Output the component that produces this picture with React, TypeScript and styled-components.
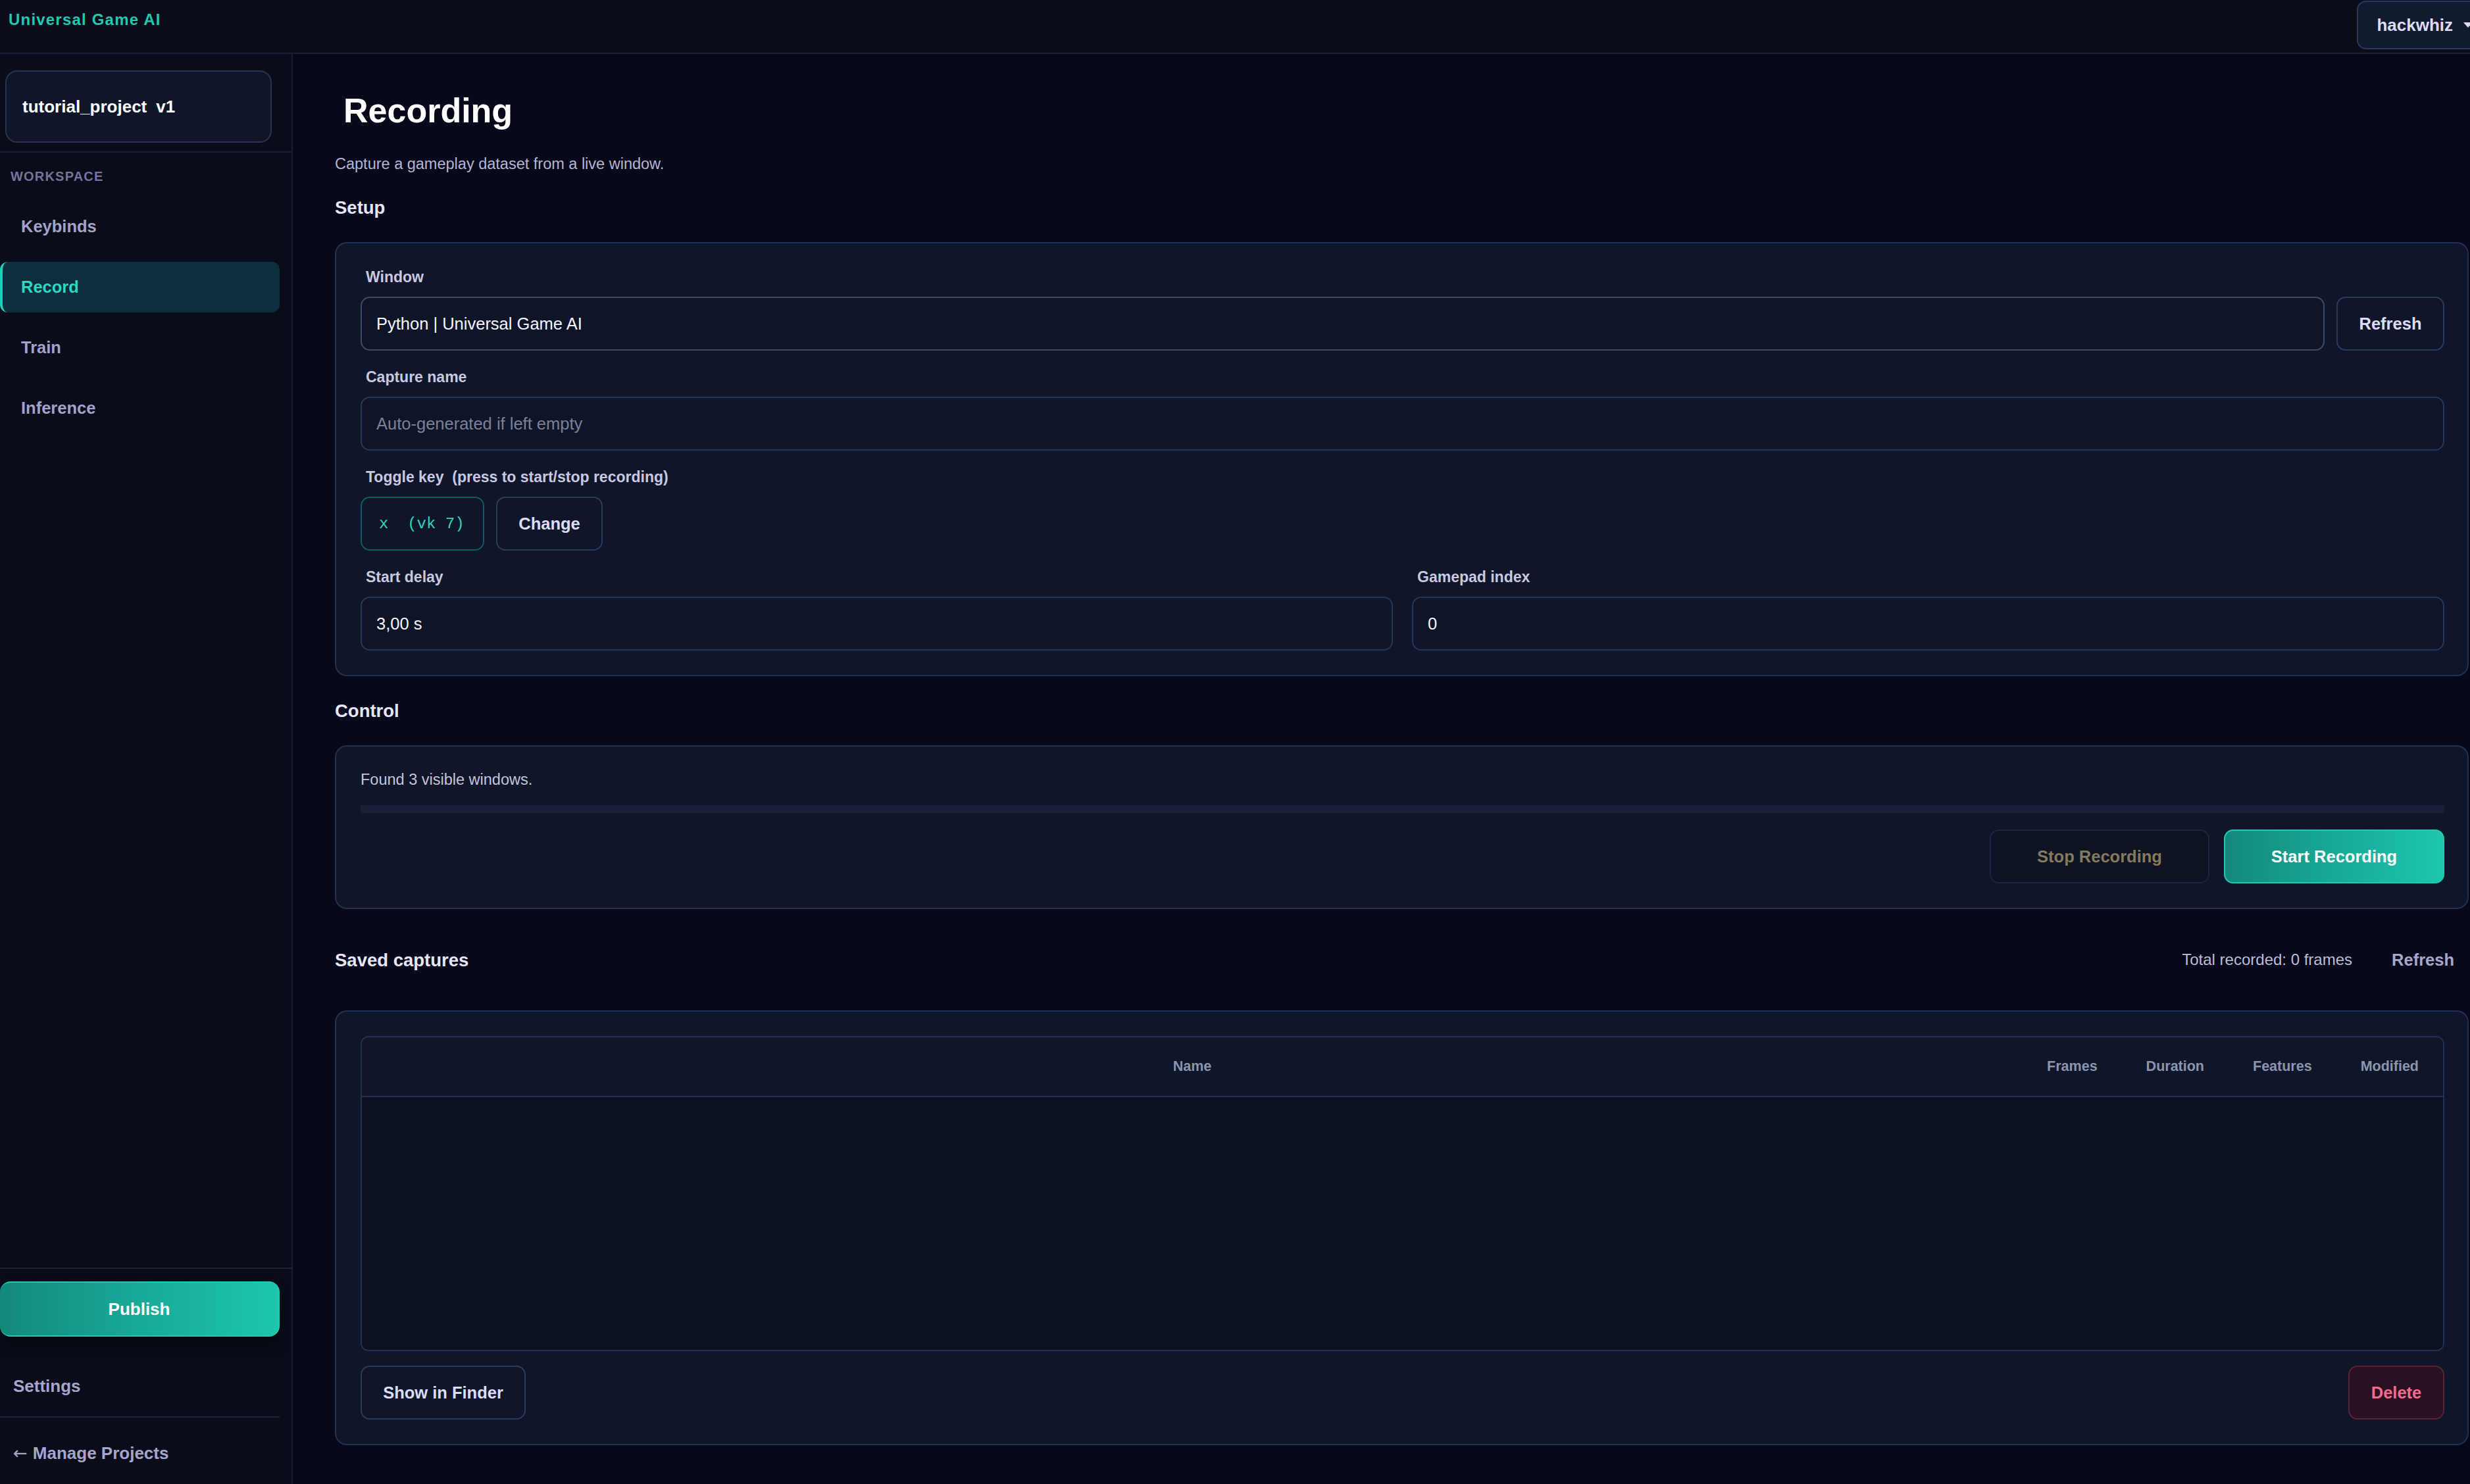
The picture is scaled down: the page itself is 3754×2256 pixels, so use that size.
import styled, { createGlobalStyle } from "styled-components"

const GlobalStyle = createGlobalStyle`
  * {
    box-sizing: border-box;
  }

  html,
  body {
    margin: 0;
    background: #07081a;
  }

  body {
    font-family: "Liberation Sans", Arial, sans-serif;
    color: #e4e4f7;
    overflow: hidden;
  }
`

const navItems = ["Keybinds", "Record", "Train", "Inference"]
const columns = ["Name", "Frames", "Duration", "Features", "Modified"]

export default function App() {
  return (
    <Shell>
      <GlobalStyle />
      <TopBar>
        <Brand>Universal Game AI</Brand>
        <UserButton>
          hackwhiz
          <svg width="14" height="8" viewBox="0 0 14 8">
            <path d="M0 0 L14 0 L7 8 Z" fill="#dcdcf7" />
          </svg>
        </UserButton>
      </TopBar>

      <Body>
        <Sidebar>
          <ProjectBlock>
            <ProjectCard>
              tutorial_project<Version>v1</Version>
            </ProjectCard>
          </ProjectBlock>

          <NavBlock>
            <SectionLabel>WORKSPACE</SectionLabel>
            <NavList>
              {navItems.map((item) => (
                <NavItem key={item} $active={item === "Record"}>
                  {item}
                </NavItem>
              ))}
            </NavList>
          </NavBlock>

          <SidebarFooter>
            <PublishButton>Publish</PublishButton>
            <SettingsLink>Settings</SettingsLink>
            <ManageLink>
              <BackArrow>←</BackArrow>Manage Projects
            </ManageLink>
          </SidebarFooter>
        </Sidebar>

        <Main>
          <PageTitle>Recording</PageTitle>
          <Subtitle>Capture a gameplay dataset from a live window.</Subtitle>

          <SectionTitle>Setup</SectionTitle>
          <Card>
            <Fields>
              <Field>
                <FieldLabel>Window</FieldLabel>
                <InlineRow>
                  <TextInput $strong readOnly value="Python | Universal Game AI" />
                  <Button $width={164}>Refresh</Button>
                </InlineRow>
              </Field>

              <Field>
                <FieldLabel>Capture name</FieldLabel>
                <TextInput placeholder="Auto-generated if left empty" />
              </Field>

              <Field>
                <FieldLabel>Toggle key{"  "}(press to start/stop recording)</FieldLabel>
                <InlineRow>
                  <KeyChip>{"x  (vk 7)"}</KeyChip>
                  <Button $width={162}>Change</Button>
                </InlineRow>
              </Field>

              <TwoColumns>
                <Field>
                  <FieldLabel>Start delay</FieldLabel>
                  <TextInput readOnly value="3,00 s" />
                </Field>
                <Field>
                  <FieldLabel>Gamepad index</FieldLabel>
                  <TextInput readOnly value="0" />
                </Field>
              </TwoColumns>
            </Fields>
          </Card>

          <SectionTitle>Control</SectionTitle>
          <Card>
            <StatusText>Found 3 visible windows.</StatusText>
            <ProgressTrack />
            <ControlActions>
              <StopButton disabled>Stop Recording</StopButton>
              <PrimaryButton>Start Recording</PrimaryButton>
            </ControlActions>
          </Card>

          <SavedHeader>
            <SectionTitle>Saved captures</SectionTitle>
            <SavedMeta>
              <MetaText>Total recorded: 0 frames</MetaText>
              <GhostButton>Refresh</GhostButton>
            </SavedMeta>
          </SavedHeader>
          <Card>
            <CapturesTable>
              <TableHead>
                {columns.map((column) => (
                  <HeadCell key={column}>{column}</HeadCell>
                ))}
              </TableHead>
              <TableBody />
            </CapturesTable>
            <TableActions>
              <Button $width={251}>Show in Finder</Button>
              <DangerButton>Delete</DangerButton>
            </TableActions>
          </Card>
        </Main>
      </Body>
    </Shell>
  )
}

const Shell = styled.div`
  display: flex;
  flex-direction: column;
  width: 100vw;
  height: 100vh;
  overflow: hidden;
`

const TopBar = styled.header`
  display: flex;
  justify-content: space-between;
  align-items: flex-start;
  flex-shrink: 0;
  height: 82px;
  padding-left: 13px;
  background: #0a0c19;
  border-bottom: 2px solid #1b2036;
`

const Brand = styled.div`
  margin-top: 16px;
  font-size: 24px;
  line-height: 28px;
  font-weight: 700;
  letter-spacing: 1.2px;
  color: #1fc9b2;
`

const UserButton = styled.button`
  display: flex;
  align-items: center;
  gap: 16px;
  flex-shrink: 0;
  height: 74px;
  margin-top: 1px;
  margin-right: -34px;
  padding: 0 28px;
  border: 2px solid #2b385a;
  border-radius: 14px;
  background: #111a2e;
  color: #dcdcf7;
  font-family: inherit;
  font-size: 26px;
  font-weight: 700;
`

const Body = styled.div`
  display: flex;
  flex: 1;
  min-height: 0;
`

const Sidebar = styled.aside`
  display: flex;
  flex-direction: column;
  flex-shrink: 0;
  width: 445px;
  background: #0a0c19;
  border-right: 2px solid #171c33;
`

const ProjectBlock = styled.div`
  padding: 25px 0 13px 8px;
  border-bottom: 2px solid #1b2036;
`

const ProjectCard = styled.div`
  display: flex;
  align-items: center;
  width: 405px;
  height: 110px;
  padding-left: 24px;
  border: 2px solid #283352;
  border-radius: 18px;
  background: #10162a;
  color: #ffffff;
  font-size: 26px;
  font-weight: 700;
`

const Version = styled.span`
  margin-left: 14px;
`

const NavBlock = styled.nav`
  display: flex;
  flex-direction: column;
  flex: 1;
  min-height: 0;
  padding-top: 24px;
`

const SectionLabel = styled.div`
  margin-bottom: 26px;
  padding-left: 16px;
  font-size: 20px;
  line-height: 24px;
  font-weight: 700;
  letter-spacing: 1.2px;
  color: #74749c;
`

const NavList = styled.div`
  display: flex;
  flex-direction: column;
  gap: 15px;
  width: 425px;
`

const NavItem = styled.div<{ $active?: boolean }>`
  display: flex;
  align-items: center;
  height: 77px;
  padding-left: 28px;
  border-left: 4px solid ${(p) => (p.$active ? "#1fd0b8" : "transparent")};
  border-radius: 12px;
  background: ${(p) => (p.$active ? "#0c2e3d" : "transparent")};
  color: ${(p) => (p.$active ? "#2dd8c0" : "#a2a2ca")};
  font-size: 25.5px;
  font-weight: 700;
`

const SidebarFooter = styled.div`
  flex-shrink: 0;
  padding-top: 19px;
  border-top: 2px solid #1b2036;
`

const PublishButton = styled.button`
  display: block;
  width: 425px;
  height: 84px;
  border: 2px solid #22c9b2;
  border-left: none;
  border-radius: 16px;
  background: linear-gradient(90deg, #13897a 0%, #18a997 50%, #1dc6ae 100%);
  box-shadow: 0 12px 22px rgba(0, 0, 0, 0.45);
  color: #ffffff;
  font-family: inherit;
  font-size: 26px;
  font-weight: 700;
`

const SettingsLink = styled.div`
  width: 425px;
  padding: 60px 0 31px 20px;
  border-bottom: 2px solid #1d2240;
  font-size: 26px;
  line-height: 30px;
  font-weight: 700;
  color: #a5a5cd;
`

const ManageLink = styled.div`
  display: flex;
  align-items: center;
  gap: 8px;
  padding: 39px 0 32px 20px;
  font-size: 26px;
  line-height: 30px;
  font-weight: 700;
  color: #a5a5cd;
`

const BackArrow = styled.span`
  font-family: "DejaVu Sans", sans-serif;
  font-weight: 400;
  font-size: 26px;
`

const Main = styled.main`
  display: flex;
  flex-direction: column;
  gap: 36px;
  flex: 1;
  min-width: 0;
  padding: 55px 2px 0 64px;
  background: #07081a;
`

const PageTitle = styled.h1`
  margin: 0 0 0 13px;
  font-size: 52px;
  line-height: 62px;
  font-weight: 700;
  color: #ffffff;
`

const Subtitle = styled.p`
  margin: 0;
  font-size: 23.5px;
  line-height: 28px;
  color: #b4b4d4;
`

const SectionTitle = styled.h2`
  margin: 0;
  font-size: 27.5px;
  line-height: 33px;
  font-weight: 700;
  color: #e6e6f8;
`

const Card = styled.section`
  flex-shrink: 0;
  padding: 37px 35px 37px 37px;
  border: 2px solid #243050;
  border-radius: 18px;
  background: #10162a;
`

const Fields = styled.div`
  display: flex;
  flex-direction: column;
  gap: 26px;
`

const Field = styled.div`
  display: flex;
  flex-direction: column;
  gap: 16px;
  min-width: 0;
`

const FieldLabel = styled.label`
  padding-left: 8px;
  font-size: 23px;
  line-height: 28px;
  font-weight: 700;
  color: #c8c8e2;
  white-space: pre;
`

const InlineRow = styled.div`
  display: flex;
  gap: 18px;
`

const TwoColumns = styled.div`
  display: grid;
  grid-template-columns: 1fr 1fr;
  gap: 29px;
`

const TextInput = styled.input<{ $strong?: boolean }>`
  display: block;
  width: 100%;
  min-width: 0;
  height: 82px;
  padding: 0 22px;
  border: 2px solid ${(p) => (p.$strong ? "#3b4a70" : "#28345a")};
  border-radius: 14px;
  background: #0f1528;
  color: #f4f4ff;
  font-family: inherit;
  font-size: 25.5px;
  outline: none;

  &::placeholder {
    color: #7b8096;
  }
`

const Button = styled.button<{ $width?: number }>`
  flex-shrink: 0;
  width: ${(p) => (p.$width ? `${p.$width}px` : "auto")};
  height: 82px;
  padding: 0 28px;
  border: 2px solid #2e3a5c;
  border-radius: 14px;
  background: #10162a;
  color: #dcdcf7;
  font-family: inherit;
  font-size: 25.5px;
  font-weight: 700;
`

const KeyChip = styled.div`
  display: flex;
  align-items: center;
  width: 188px;
  height: 82px;
  padding-left: 26px;
  border: 2px solid #0f5b64;
  border-radius: 14px;
  background: #10162a;
  color: #2dd4bf;
  font-family: "Liberation Mono", "DejaVu Sans Mono", monospace;
  font-size: 24px;
  white-space: pre;
`

const StatusText = styled.div`
  font-size: 23.5px;
  line-height: 26px;
  color: #c4c4dc;
`

const ProgressTrack = styled.div`
  height: 12px;
  margin-top: 26px;
  border-radius: 2px;
  background: #1b2038;
`

const ControlActions = styled.div`
  display: flex;
  justify-content: flex-end;
  gap: 22px;
  margin-top: 25px;
`

const StopButton = styled(Button)`
  width: 334px;
  border-color: #1d2440;
  background: #0e1324;
  color: #85795c;
`

const PrimaryButton = styled.button`
  width: 335px;
  height: 82px;
  border: 2px solid #22c9b2;
  border-radius: 14px;
  background: linear-gradient(90deg, #13897a 0%, #18a997 50%, #1dc6ae 100%);
  color: #ffffff;
  font-family: inherit;
  font-size: 25.5px;
  font-weight: 700;
`

const SavedHeader = styled.div`
  display: flex;
  justify-content: space-between;
  align-items: center;
  flex-shrink: 0;
  height: 82px;
`

const SavedMeta = styled.div`
  display: flex;
  align-items: center;
  gap: 38px;
`

const MetaText = styled.span`
  font-size: 24px;
  color: #b9bdd8;
`

const GhostButton = styled.button`
  height: 82px;
  padding: 0 22px;
  border: none;
  background: transparent;
  color: #a7a7cd;
  font-family: inherit;
  font-size: 25.5px;
  font-weight: 700;
`

const CapturesTable = styled.div`
  display: flex;
  flex-direction: column;
  height: 479px;
  border: 2px solid #243050;
  border-radius: 12px;
  overflow: hidden;
`

const TableHead = styled.div`
  display: grid;
  grid-template-columns: 1fr auto auto auto auto;
  height: 91px;
  border-bottom: 2px solid #243050;
  background: #10162a;
`

const HeadCell = styled.div`
  padding: 0 37px;
  font-size: 21.5px;
  line-height: 89px;
  font-weight: 700;
  text-align: center;
  color: #8b95ae;
`

const TableBody = styled.div`
  flex: 1;
  background: #0b1023;
`

const TableActions = styled.div`
  display: flex;
  justify-content: space-between;
  margin-top: 22px;
`

const DangerButton = styled(Button)`
  width: 146px;
  padding: 0;
  border-color: #5b2136;
  background: #2a1121;
  color: #f36b8c;
`
